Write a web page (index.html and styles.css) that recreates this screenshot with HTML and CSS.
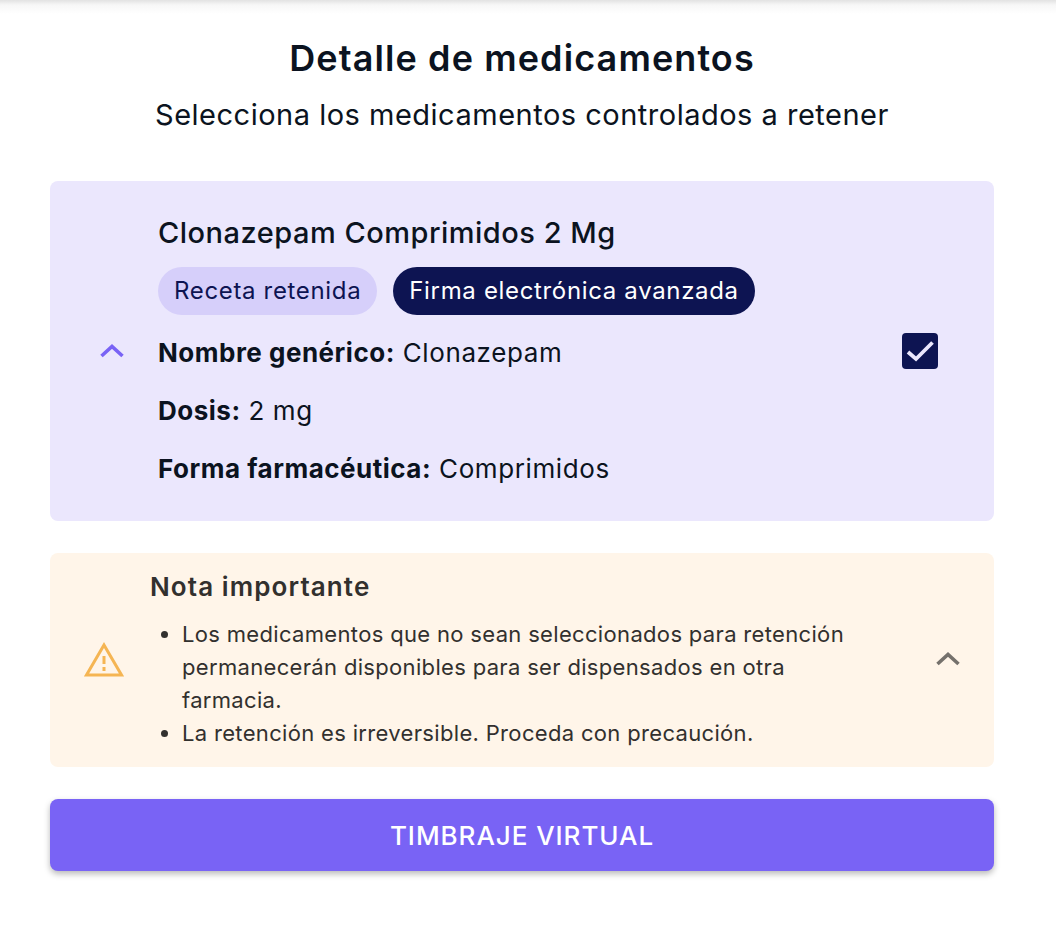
FILE: index.html
```html
<!DOCTYPE html>
<html lang="es">
<head>
<meta charset="utf-8">
<title>Detalle de medicamentos</title>
<link rel="stylesheet" href="styles.css">
</head>
<body>
<main class="page">
  <h1 class="title">Detalle de medicamentos</h1>
  <p class="subtitle">Selecciona los medicamentos controlados a retener</p>

  <section class="med-card">
    <svg class="chev-purple" width="26" height="14" viewBox="0 0 26 14"><path d="M2.5 12 L13 2.500 L23.500 12" fill="none" stroke="#7963f5" stroke-width="3.600"/></svg>
    <div class="med-body">
      <h2 class="med-name">Clonazepam Comprimidos 2 Mg</h2>
      <div class="tags">
        <span class="tag tag-light">Receta retenida</span>
        <span class="tag tag-dark">Firma electrónica avanzada</span>
      </div>
      <p class="med-row"><b>Nombre genérico:</b> Clonazepam</p>
      <p class="med-row"><b>Dosis:</b> 2 mg</p>
      <p class="med-row"><b>Forma farmacéutica:</b> Comprimidos</p>
    </div>
    <span class="checkbox">
      <svg width="36" height="36" viewBox="0 0 36 36"><path d="M6 19 L14 26 L30.500 9.500" fill="none" stroke="#ebe7fd" stroke-width="3.800"/></svg>
    </span>
  </section>

  <section class="note">
    <svg class="warn" width="40" height="36" viewBox="0 0 40 36"><path d="M20 4 L37.500 34 H2.500 Z" fill="none" stroke="#f5b553" stroke-width="3"/><path d="M20 15 V23 M20 26 V30" fill="none" stroke="#f5b553" stroke-width="3"/></svg>
    <div class="note-body">
      <h3 class="note-title">Nota importante</h3>
      <ul class="note-list">
        <li>Los medicamentos que no sean seleccionados para retención permanecerán disponibles para ser dispensados en otra farmacia.</li>
        <li>La retención es irreversible. Proceda con precaución.</li>
      </ul>
    </div>
    <svg class="chev-grey" width="26" height="14" viewBox="0 0 26 14"><path d="M2.500 12 L13 2.500 L23.500 12" fill="none" stroke="#75716c" stroke-width="3.600"/></svg>
  </section>

  <button class="cta" type="button">TIMBRAJE VIRTUAL</button>
</main>
</body>
</html>
```
FILE: styles.css
```css
* { box-sizing: border-box; }
html, body { margin: 0; padding: 0; background: #fff; }
body {
  height: 940px;
  overflow: hidden;
  font-family: "Inter", "Noto Sans", sans-serif;
  color: #0b1320;
  background: linear-gradient(#e2e2e2, #f7f7f7 5px, #fff 14px) no-repeat top / 100% 14px #fff;
}
.page { padding: 36px 62px 0 50px; width: 1056px; }
.title { margin: 0; height: 44px; line-height: 44px; font-size: 36px; font-weight: 600; text-align: center; letter-spacing: 1.1px; }
.subtitle { margin: 13px 0 0; height: 44px; line-height: 44px; font-size: 29px; font-weight: 400; text-align: center; letter-spacing: 0.5px; }
.med-card {
  margin-top: 44px;
  height: 340px;
  background: #ebe7fd;
  border-radius: 8px;
  display: flex;
  align-items: center;
  padding: 0 56px 0 49px;
}
.chev-purple { flex: none; margin-right: 33px; }
.med-body { flex: 1; }
.med-name { margin: 0; font-size: 29px; line-height: 36px; font-weight: 500; letter-spacing: 0.5px; }
.tags { display: flex; gap: 16px; margin-top: 16px; }
.tag { height: 48px; line-height: 48px; padding: 0 16px; border-radius: 24px; font-size: 24px; letter-spacing: 0.66px; }
.tag-light { background: #d6cffa; color: #0d1452; }
.tag-dark { background: #0d1452; color: #fff; }
.med-row { margin: 20px 0 0; font-size: 26px; line-height: 38px; letter-spacing: 0.6px; }
.med-row b { font-weight: 700; letter-spacing: 0.5px; }
.tags + .med-row { margin-top: 19px; }
.checkbox {
  flex: none;
  width: 36px; height: 36px;
  background: #0d1452;
  border-radius: 4px;
  display: block;
}
.checkbox svg { display: block; }
.note {
  margin-top: 32px;
  height: 214px;
  background: #fff5e9;
  border-radius: 8px;
  display: flex;
  align-items: center;
  padding: 0 33px 0 34px;
  color: #32302e;
}
.warn { flex: none; margin-right: 26px; margin-top: -2px; }
.note-body { flex: 1; }
.note-title { margin: 0 0 15px; font-size: 26px; line-height: 32px; font-weight: 600; letter-spacing: 1.1px; }
.note-list { margin: 0; padding-left: 32px; max-width: 702px; font-size: 22px; line-height: 33px; letter-spacing: 0.33px; }
.chev-grey { flex: none; margin-left: 36px; margin-top: -2px; }
.cta {
  display: block;
  width: 100%;
  margin-top: 32px;
  height: 72px;
  border: 0;
  border-radius: 8px;
  background: #7963f5;
  color: #fff;
  font-family: inherit;
  font-size: 26px;
  font-weight: 500;
  letter-spacing: 0.95px;
  box-shadow: 0 3px 6px rgba(0,0,0,0.28);
}
```
